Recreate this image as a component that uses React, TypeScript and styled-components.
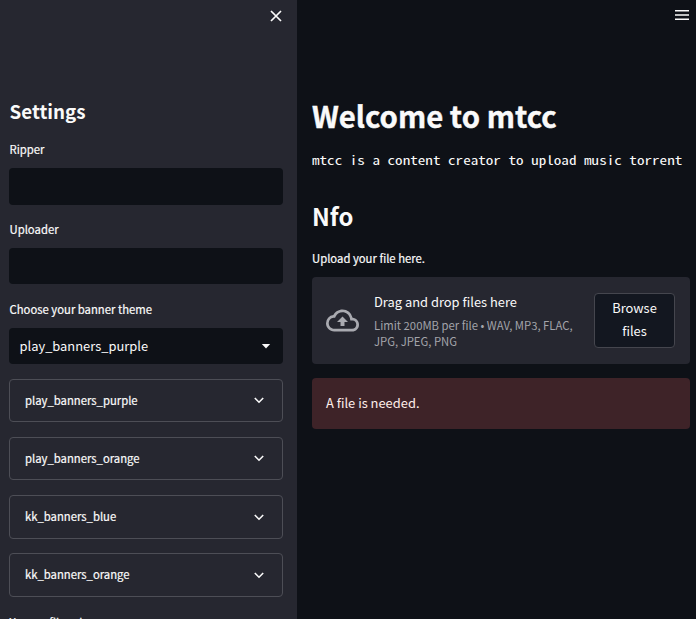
import React from "react";
import styled, { createGlobalStyle } from "styled-components";

const sans = `"Source Sans Pro", "Noto Sans CJK JP", "Noto Sans CJK SC", sans-serif`;

const GlobalStyle = createGlobalStyle`
  *, *::before, *::after { box-sizing: border-box; }
  body { margin: 0; background: #0e1117; color: #fafafa; font-family: ${sans}; overflow: hidden; }
  h1, h2, p { margin: 0; }
`;

const Page = styled.div`
  display: flex;
  width: 696px;
  height: 619px;
  overflow: hidden;
`;

const Sidebar = styled.aside`
  width: 297px;
  flex: none;
  background: #262730;
  padding: 0 14px 0 9px;
  overflow: hidden;
`;

const CloseBar = styled.div`
  display: flex;
  justify-content: flex-end;
  height: 97px;
  padding-top: 9px;
`;

const SidebarTitle = styled.h2`
  font-size: 18.8px;
  font-weight: 700;
  line-height: 28px;
  height: 43px;
  padding-left: 0.5px;
`;

const Label = styled.label`
  display: block;
  font-size: 11.3px;
  line-height: 18px;
  height: 28px;
  padding-left: 0.5px;
  white-space: nowrap;
  -webkit-text-stroke: 0.2px currentColor;
`;

const MainLabel = styled(Label)`
  padding-left: 0;
`;

const TextInput = styled.input<{ $height: number }>`
  display: block;
  width: 100%;
  height: ${(p) => p.$height}px;
  margin-bottom: ${(p) => 52 - p.$height}px;
  border: 0;
  border-radius: 4px;
  background: #0e1117;
  color: #fafafa;
  outline: none;
`;

const Select = styled.div`
  display: flex;
  align-items: center;
  justify-content: space-between;
  height: 36px;
  margin-bottom: 15px;
  padding: 0 12px 0 10.5px;
  border-radius: 4px;
  background: #0e1117;
  font-size: 12.9px;
`;

const SelectValue = styled.span`
  line-height: 20px;
`;

const Expander = styled.div<{ $height: number; $gap: number }>`
  display: flex;
  align-items: center;
  justify-content: space-between;
  height: ${(p) => p.$height}px;
  margin-bottom: ${(p) => p.$gap}px;
  padding: 0 18px 0 15px;
  border: 1px solid #4d4e56;
  border-radius: 4px;
  font-size: 11.3px;
  line-height: 18px;
`;

const ExpanderName = styled.span`
  padding-bottom: 2px;
  -webkit-text-stroke: 0.2px currentColor;
`;

const Main = styled.main`
  flex: 1;
  min-width: 0;
  padding: 0 6px 0 15px;
`;

const MenuBar = styled.header`
  display: flex;
  justify-content: flex-end;
  height: 92px;
  padding: 10px 1px 0 0;
`;

const Title = styled.h1`
  font-size: 29.3px;
  font-weight: 700;
  line-height: 46px;
  height: 58px;
  white-space: nowrap;
  -webkit-text-stroke: 0.4px currentColor;
`;

const Intro = styled.p`
  font-family: "Noto Sans Mono CJK JP", "DejaVu Sans Mono", monospace;
  font-size: 12.6px;
  line-height: 20px;
  width: 310px;
  height: 46px;
  white-space: pre;
  transform: scaleX(1.2);
  transform-origin: 0 0;
`;

const SectionTitle = styled.h2`
  font-size: 23.8px;
  font-weight: 700;
  line-height: 40px;
  height: 53px;
`;

const Dropzone = styled.section`
  display: flex;
  align-items: center;
  height: 87px;
  margin-bottom: 14px;
  padding: 0 15px 0 14px;
  border-radius: 4px;
  background: #262730;
`;

const DropText = styled.div`
  flex: 1;
  margin-left: 15px;
  padding-bottom: 3px;
`;

const DropTitle = styled.p`
  font-size: 12.9px;
  line-height: 23px;
  margin-bottom: 4px;
`;

const DropHint = styled.p`
  color: #a3a4aa;
  font-size: 11.3px;
  line-height: 16px;
  white-space: pre-line;
`;

const BrowseButton = styled.button`
  width: 81px;
  height: 55px;
  padding: 0 10px 3px;
  border: 1px solid #45464e;
  border-radius: 4px;
  background: #131720;
  color: #fafafa;
  font-family: inherit;
  font-size: 12.9px;
  line-height: 23px;
`;

const Alert = styled.div`
  display: flex;
  align-items: center;
  height: 51px;
  padding: 0 14px 2px;
  border-radius: 4px;
  background: #3e2328;
  color: #ffeeea;
  font-size: 12.9px;
`;

const Chevron = () => (
  <svg width="10" height="7" viewBox="0 0 10 7" fill="none" stroke="#fafafa" strokeWidth="1.6">
    <path d="M.8 1 5 5.2 9.2 1" />
  </svg>
);

const themes = [
  { name: "play_banners_purple", height: 43, gap: 15 },
  { name: "play_banners_orange", height: 43, gap: 15 },
  { name: "kk_banners_blue", height: 44, gap: 14 },
  { name: "kk_banners_orange", height: 44, gap: 16 },
];

export default function App() {
  return (
    <>
      <GlobalStyle />
      <Page>
        <Sidebar>
          <CloseBar>
            <svg width="14" height="14" viewBox="0 0 14 14" fill="none" stroke="#fafafa" strokeWidth="1.7">
              <path d="m2 2 10 10M12 2 2 12" />
            </svg>
          </CloseBar>
          <SidebarTitle>Settings</SidebarTitle>
          <Label htmlFor="ripper">Ripper</Label>
          <TextInput id="ripper" $height={37} />
          <Label htmlFor="uploader">Uploader</Label>
          <TextInput id="uploader" $height={36} />
          <Label>Choose your banner theme</Label>
          <Select>
            <SelectValue>play_banners_purple</SelectValue>
            <svg width="10" height="5" viewBox="0 0 10 5" fill="#fafafa">
              <path d="M.8 0h8.4L5 4.6z" />
            </svg>
          </Select>
          {themes.map((t) => (
            <Expander key={t.name} $height={t.height} $gap={t.gap}>
              <ExpanderName>{t.name}</ExpanderName>
              <Chevron />
            </Expander>
          ))}
          <Label>You profile url</Label>
        </Sidebar>
        <Main>
          <MenuBar>
            <svg width="14" height="10" viewBox="0 0 14 10" fill="#fafafa">
              <path d="M0 0h14v1.6H0zM0 4.2h14v1.6H0zM0 8.4h14V10H0z" />
            </svg>
          </MenuBar>
          <Title>Welcome to mtcc</Title>
          <Intro>mtcc is a content creator to upload music torrent</Intro>
          <SectionTitle>Nfo</SectionTitle>
          <MainLabel as="p">Upload your file here.</MainLabel>
          <Dropzone>
            <svg width="33" height="33" viewBox="0 0 24 24" fill="#a9aab0">
              <path d="M19.35 10.04A7.49 7.49 0 0 0 12 4C9.11 4 6.6 5.64 5.35 8.04A5.994 5.994 0 0 0 0 14c0 3.31 2.69 6 6 6h13c2.76 0 5-2.24 5-5 0-2.64-2.05-4.78-4.65-4.96zM19 18H6c-2.21 0-4-1.79-4-4 0-2.05 1.53-3.76 3.56-3.97l1.07-.11.5-.95A5.469 5.469 0 0 1 12 6c2.62 0 4.88 1.86 5.39 4.43l.3 1.5 1.53.11A2.98 2.98 0 0 1 22 15c0 1.65-1.35 3-3 3zM8 13h2.55v3h2.9v-3H16l-4-4z" />
            </svg>
            <DropText>
              <DropTitle>Drag and drop files here</DropTitle>
              <DropHint>{"Limit 200MB per file • WAV, MP3, FLAC,\nJPG, JPEG, PNG"}</DropHint>
            </DropText>
            <BrowseButton>Browse files</BrowseButton>
          </Dropzone>
          <Alert>A file is needed.</Alert>
        </Main>
      </Page>
    </>
  );
}
